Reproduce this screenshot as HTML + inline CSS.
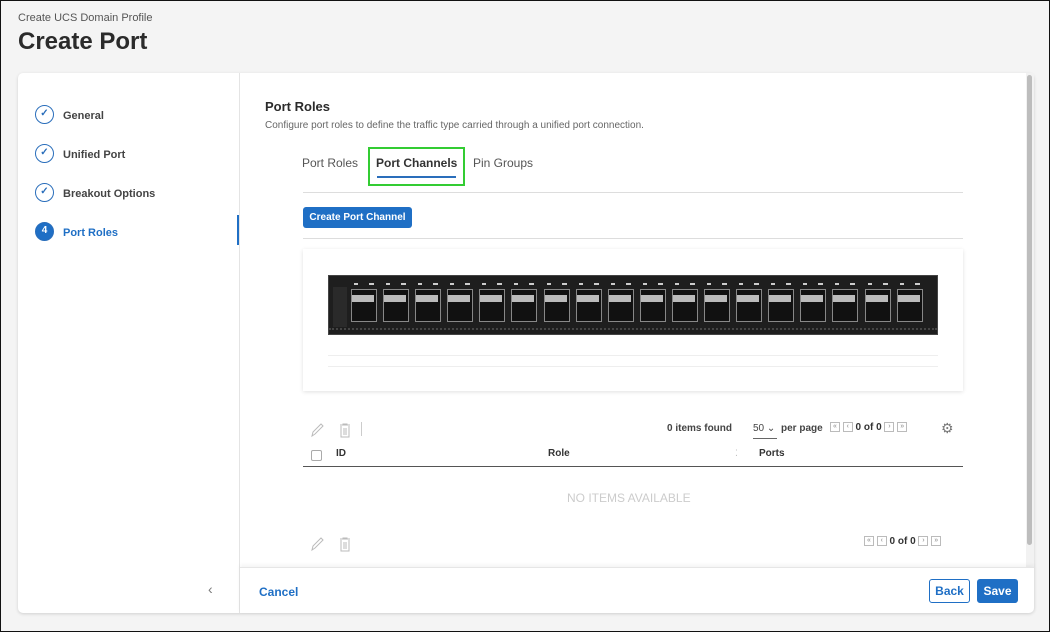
<!DOCTYPE html>
<html><head><meta charset="utf-8"><style>
*{box-sizing:border-box;margin:0;padding:0}
body{width:1050px;height:632px;background:#f4f4f4;font-family:"Liberation Sans",sans-serif;position:relative;overflow:hidden;border:1px solid #111;color:#333}
.abs{position:absolute}
.crumb{left:17px;top:11px;font-size:11px;color:#555}
.title{left:17px;top:27px;font-size:24px;font-weight:bold;color:#2b2b2b}
.card{left:17px;top:72px;width:1016px;height:540px;background:#fff;border-radius:5px;box-shadow:0 1px 3px rgba(0,0,0,.15)}
.nav{left:0;top:0;width:222px;height:540px;border-right:1px solid #e4e4e4}
.step{position:absolute;left:17px;font-size:11px;font-weight:bold;color:#444}
.circ{position:absolute;left:0;top:-9px;width:19px;height:19px;border:1.5px solid #2a6ebb;border-radius:50%;color:#2a6ebb;font-size:10px;text-align:center;line-height:16px}
.step span.t{position:absolute;left:28px;top:-4px;white-space:nowrap}
.ports{display:grid;grid-template-columns:repeat(18,26px);column-gap:6.1px;position:absolute;left:350px;top:282px}
.p{width:26px;position:relative;height:40px}
.p .c{position:absolute;top:6px;left:0;width:26px;height:33px;border:1px solid #888;background:#111}
.p .m{position:absolute;top:12px;left:1px;width:22px;height:7px;background:#bbb}
.p .l{position:absolute;top:0;left:3px;width:20px;height:2px;border-left:4px solid #ccc;border-right:5px solid #ccc}
.pg{display:inline-block;width:10px;height:10px;border:1px solid #bbb;font-size:7px;line-height:8px;text-align:center;color:#aaa;vertical-align:middle}
</style></head><body>
<div class="abs crumb">Create UCS Domain Profile</div>
<div class="abs title">Create Port</div>
<div class="abs card">
 <div class="abs nav">
  <div class="step" style="top:41px"><div class="circ">✓</div><span class="t">General</span></div>
  <div class="step" style="top:80px"><div class="circ">✓</div><span class="t">Unified Port</span></div>
  <div class="step" style="top:119px"><div class="circ">✓</div><span class="t">Breakout Options</span></div>
  <div class="step" style="top:158px"><div class="circ" style="background:#1f6fc5;color:#fff;font-weight:bold">4</div><span class="t" style="color:#1f6fc5">Port Roles</span></div>
  <div class="abs" style="left:219px;top:142px;width:2px;height:30px;background:#1f6fc5"></div>
  <div class="abs" style="left:190px;top:508px;color:#777;font-size:14px">‹</div>
 </div>
 <div class="abs" style="left:1008px;top:0;width:8px;height:494px;background:#f2f2f2"><div style="margin:2px 1px;width:5px;height:470px;background:#bdbdbd;border-radius:3px"></div></div>
 <div class="abs" style="left:222px;top:494px;width:794px;height:46px;border-top:1px solid #e6e6e6;box-shadow:0 -2px 4px rgba(0,0,0,.05)">
  <div class="abs" style="left:19px;top:17px;font-size:12px;font-weight:bold;color:#1f6fc5">Cancel</div>
  <div class="abs" style="left:689px;top:11px;width:41px;height:24px;border:1px solid #1f6fc5;border-radius:3px;color:#1f6fc5;font-size:12px;font-weight:bold;text-align:center;line-height:22px">Back</div>
  <div class="abs" style="left:737px;top:11px;width:41px;height:24px;background:#1f6fc5;border-radius:3px;color:#fff;font-size:12px;font-weight:bold;text-align:center;line-height:24px">Save</div>
 </div>
</div>
<div class="abs" style="left:264px;top:98px;font-size:13px;font-weight:bold;color:#2b2b2b">Port Roles</div>
<div class="abs" style="left:264px;top:119px;font-size:10px;color:#666">Configure port roles to define the traffic type carried through a unified port connection.</div>
<div class="abs" style="left:301px;top:155px;font-size:12px;color:#555">Port Roles</div>
<div class="abs" style="left:367px;top:146px;width:97px;height:39px;border:2px solid #3c3"></div>
<div class="abs" style="left:375px;top:155px;font-size:12px;font-weight:bold;color:#333">Port Channels</div>
<div class="abs" style="left:376px;top:175px;width:79px;height:2px;background:#2a6ebb"></div>
<div class="abs" style="left:472px;top:155px;font-size:12px;color:#555">Pin Groups</div>
<div class="abs" style="left:302px;top:191px;width:660px;height:1px;background:#ddd"></div>
<div class="abs" style="left:302px;top:206px;width:109px;height:21px;background:#1f6fc5;border-radius:3px;color:#fff;font-size:10px;font-weight:bold;text-align:center;line-height:21px">Create Port Channel</div>
<div class="abs" style="left:302px;top:237px;width:660px;height:1px;background:#ddd"></div>
<div class="abs" style="left:302px;top:248px;width:660px;height:142px;background:#fff;box-shadow:0 1px 4px rgba(0,0,0,.12)"></div>
<div class="abs" style="left:327px;top:274px;width:610px;height:60px;background:#1e1e1e;border:1px solid #444"></div>
<div class="abs" style="left:332px;top:286px;width:14px;height:40px;background:#2a2a2a"></div>
<div class="abs" style="left:327px;top:354px;width:610px;height:12px;border-top:1px solid #eee;border-bottom:1px solid #eee"></div>
<div class="ports">
<div class="p"><div class="l"></div><div class="c"></div><div class="m"></div></div><div class="p"><div class="l"></div><div class="c"></div><div class="m"></div></div><div class="p"><div class="l"></div><div class="c"></div><div class="m"></div></div><div class="p"><div class="l"></div><div class="c"></div><div class="m"></div></div><div class="p"><div class="l"></div><div class="c"></div><div class="m"></div></div><div class="p"><div class="l"></div><div class="c"></div><div class="m"></div></div><div class="p"><div class="l"></div><div class="c"></div><div class="m"></div></div><div class="p"><div class="l"></div><div class="c"></div><div class="m"></div></div><div class="p"><div class="l"></div><div class="c"></div><div class="m"></div></div><div class="p"><div class="l"></div><div class="c"></div><div class="m"></div></div><div class="p"><div class="l"></div><div class="c"></div><div class="m"></div></div><div class="p"><div class="l"></div><div class="c"></div><div class="m"></div></div><div class="p"><div class="l"></div><div class="c"></div><div class="m"></div></div><div class="p"><div class="l"></div><div class="c"></div><div class="m"></div></div><div class="p"><div class="l"></div><div class="c"></div><div class="m"></div></div><div class="p"><div class="l"></div><div class="c"></div><div class="m"></div></div><div class="p"><div class="l"></div><div class="c"></div><div class="m"></div></div><div class="p"><div class="l"></div><div class="c"></div><div class="m"></div></div>
</div>
<div class="abs" style="left:328px;top:327px;width:608px;height:4px;border-top:2px dotted #444"></div>
<svg class="abs" style="left:309px;top:421px" width="50" height="16"><path d="M2 14 L3 10 L11 2 L13 4 L5 12 Z" fill="none" stroke="#bbb"/><path d="M30 3h10M33 3v-1h4v1M31 4v11h8v-11M34 6v7M36 6v7" fill="none" stroke="#bbb"/></svg>
<div class="abs" style="left:360px;top:421px;width:1px;height:14px;background:#ccc"></div>
<div class="abs" style="left:666px;top:422px;font-size:10px;font-weight:bold;color:#444">0 items found</div>
<div class="abs" style="left:752px;top:422px;font-size:10px;color:#444">50 ⌄</div>
<div class="abs" style="left:752px;top:437px;width:24px;height:1px;background:#666"></div>
<div class="abs" style="left:780px;top:422px;font-size:10px;font-weight:bold;color:#444">per page</div>
<div class="abs" style="left:829px;top:421px;font-size:10px;font-weight:bold;color:#333"><span class="pg">«</span> <span class="pg">‹</span> 0 of 0 <span class="pg">›</span> <span class="pg">»</span></div>
<div class="abs" style="left:940px;top:419px;font-size:14px;color:#777">⚙</div>
<div class="abs" style="left:310px;top:449px;width:11px;height:11px;border:1px solid #aaa;border-radius:2px"></div>
<div class="abs" style="left:335px;top:447px;font-size:10px;font-weight:bold;color:#333">ID</div>
<div class="abs" style="left:547px;top:447px;font-size:10px;font-weight:bold;color:#333">Role</div>
<div class="abs" style="left:734px;top:447px;font-size:9px;color:#bbb">⁚</div>
<div class="abs" style="left:758px;top:447px;font-size:10px;font-weight:bold;color:#333">Ports</div>
<div class="abs" style="left:302px;top:465px;width:660px;height:1px;background:#555"></div>
<div class="abs" style="left:566px;top:490px;font-size:12px;color:#ccc">NO ITEMS AVAILABLE</div>
<svg class="abs" style="left:309px;top:535px" width="50" height="16"><path d="M2 14 L3 10 L11 2 L13 4 L5 12 Z" fill="none" stroke="#bbb"/><path d="M30 3h10M33 3v-1h4v1M31 4v11h8v-11M34 6v7M36 6v7" fill="none" stroke="#bbb"/></svg>
<div class="abs" style="left:863px;top:535px;font-size:10px;font-weight:bold;color:#333"><span class="pg">«</span> <span class="pg">‹</span> 0 of 0 <span class="pg">›</span> <span class="pg">»</span></div>
</body></html>
